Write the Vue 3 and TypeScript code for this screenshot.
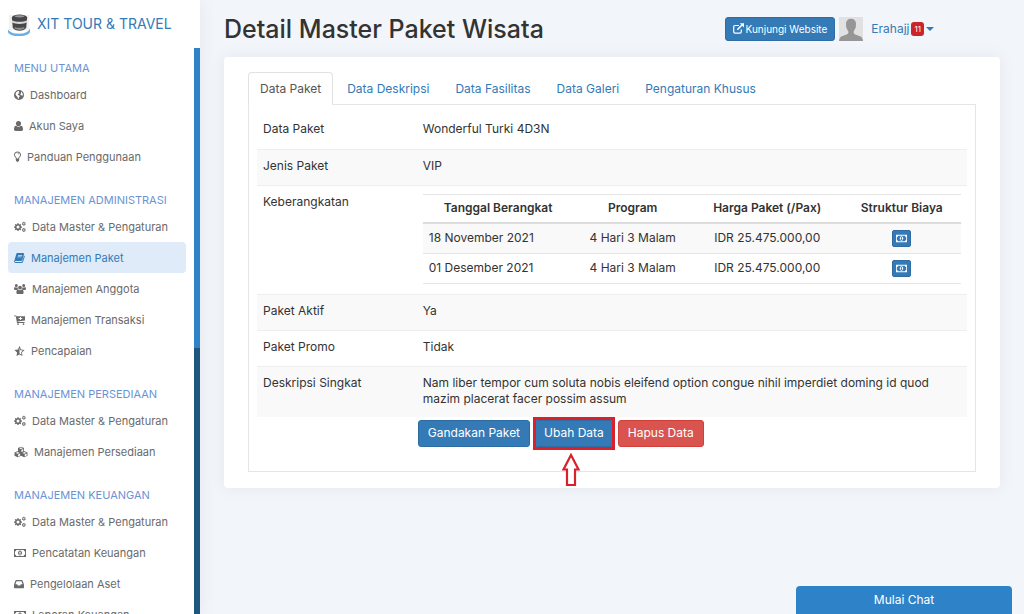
<script setup lang="ts">
import { ref } from 'vue'

type IconName = 'globe' | 'user' | 'bulb' | 'cogs' | 'book' | 'users' | 'cart' | 'star' | 'cubes' | 'money' | 'inbox'
interface MenuItem { label: string; icon: IconName; active?: boolean }
interface MenuGroup { title: string; items: MenuItem[] }
interface Departure { date: string; program: string; price: string }

const menu: MenuGroup[] = [
  {
    title: 'MENU UTAMA',
    items: [
      { label: 'Dashboard', icon: 'globe' },
      { label: 'Akun Saya', icon: 'user' },
      { label: 'Panduan Penggunaan', icon: 'bulb' },
    ],
  },
  {
    title: 'MANAJEMEN ADMINISTRASI',
    items: [
      { label: 'Data Master & Pengaturan', icon: 'cogs' },
      { label: 'Manajemen Paket', icon: 'book', active: true },
      { label: 'Manajemen Anggota', icon: 'users' },
      { label: 'Manajemen Transaksi', icon: 'cart' },
      { label: 'Pencapaian', icon: 'star' },
    ],
  },
  {
    title: 'MANAJEMEN PERSEDIAAN',
    items: [
      { label: 'Data Master & Pengaturan', icon: 'cogs' },
      { label: 'Manajemen Persediaan', icon: 'cubes' },
    ],
  },
  {
    title: 'MANAJEMEN KEUANGAN',
    items: [
      { label: 'Data Master & Pengaturan', icon: 'cogs' },
      { label: 'Pencatatan Keuangan', icon: 'money' },
      { label: 'Pengelolaan Aset', icon: 'inbox' },
      { label: 'Laporan Keuangan', icon: 'money' },
    ],
  },
]

const iconWidths: Record<IconName, number> = {
  globe: 10, user: 9, bulb: 7, cogs: 12, book: 11, users: 12, cart: 11, star: 11, cubes: 14, money: 12, inbox: 10,
}

// All glyphs are 12 units high and as wide as listed above.
const icons: Record<IconName, string> = {
  globe: 'M5 1a5 5 0 1 0 0 10A5 5 0 0 0 5 1zM4.300 1.900 5.300 2.300 4.700 3.300 5.500 3.700 4.600 4.700 3.600 5.100 4.200 6.100 5.300 6.400 5.900 7.200 4.800 8.400 4.600 9.900 3.900 9.800 3.500 8 2.300 6.800 1.500 5.500 2 3.600 3.100 2.400zM7 2.500 8.300 3.900 8.900 5.400 8.400 6.900 7.700 6.200 6.900 6.300 6.300 5.200 7 4.200z',
  user: 'M4.500 1a2.500 2.500 0 1 1 0 5.100 2.500 2.500 0 0 1 0-5.100zM2.100 5.700c1.400 1.300 3.400 1.300 4.800 0 1.500.1 2.100 1.700 2.100 3.600C9 10.300 8.300 11 7.500 11h-6C.7 11 0 10.300 0 9.300c0-1.900.6-3.500 2.100-3.600z',
  bulb: 'M3.500.500C1.600.500 0 1.900 0 3.700c0 1 .4 1.600 1 2.300.4.500.8 1.100.9 1.700-.3.300-.3.600 0 .9-.2.300-.2.700.1.900-.1.600.3.900.8.900.1.300.4.500.7.500s.6-.2.700-.5c.5 0 .9-.3.800-.9.300-.2.300-.6.100-.9.300-.3.300-.6 0-.9.100-.6.500-1.200.9-1.700.6-.7 1-1.300 1-2.300C7 1.900 5.400.500 3.500.500zm0 .9c1.400 0 2.600 1 2.600 2.300 0 .7-.3 1.200-.8 1.700-.5.600-1 1.300-1.100 2.100H2.800C2.700 6.700 2.200 6 1.700 5.400 1.200 4.900.9 4.400.9 3.700.9 2.400 2.100 1.400 3.500 1.400zM3.500 2.200v.5c.6 0 1.200.3 1.200.9h.5c0-.9-.9-1.400-1.700-1.400z',
  cogs: 'M3.400 2.200h1.200l.2 1 .7.300.9-.6.800.8-.6.900.3.700 1 .2v1.200l-1 .2-.3.700.6.900-.8.800-.9-.6-.7.300-.2 1H3.400l-.2-1-.7-.3-.9.600-.8-.8.6-.9-.3-.7-1-.2V5.500l1-.2.300-.7-.6-.9.800-.8.900.6.700-.3zM4 4.600a1.500 1.500 0 1 0 0 3 1.500 1.500 0 0 0 0-3zM9.400.800h.9l.2.700.7-.1.500.8-.5.500.5.600-.5.800-.7-.1-.2.700h-.9l-.2-.7-.7.100-.5-.8.500-.6L8 2.200l.5-.8.700.1zM9.850 2a.750.750 0 1 0 0 1.500.750.750 0 0 0 0-1.500zM9.400 7h.9l.2.700.7-.1.500.8-.5.500.5.600-.5.800-.7-.1-.2.700h-.9l-.2-.7-.7.100-.5-.8.500-.6L8 8.400l.5-.8.700.1zM9.850 8.200a.750.750 0 1 0 0 1.500.750.750 0 0 0 0-1.500z',
  book: 'M3.700 1h5.400c.8 0 1.100.5.900 1.200L8.300 8.100c-.2.600-.7 1-1.400 1H1.800c-.5 0-.7.100-.7.400 0 .4.300.5.800.5h5.600c.4 0 .6-.2.700-.5l1.900-6.100c.6.300.7.700.6 1.300L9 10c-.2.600-.7 1-1.300 1H1.800C.7 11 0 10.200.2 9.200L2.200 2.200C2.400 1.500 2.900 1 3.700 1zM4.200 3.100 4 3.700h4l.2-.6zM3.700 4.600l-.2.600h4l.2-.6z',
  users: 'M6 2.700a1.900 1.900 0 1 1 0 3.800 1.900 1.900 0 0 1 0-3.800zM2.300 1a1.500 1.500 0 1 1 0 3 1.500 1.500 0 0 1 0-3zM9.700 1a1.500 1.500 0 1 1 0 3 1.500 1.500 0 0 1 0-3zM.9 4c.9.700 1.900.7 2.700.2-.1 1 .2 1.700.7 2.100-.7.100-1.100.3-1.500.7H1C.4 7 0 6.700 0 6.100 0 5.100.2 4.100.9 4zM11.100 4c.7.100.9 1.100.9 2.100 0 .6-.4.900-1 .9H9.200c-.4-.4-.8-.6-1.500-.7.500-.4.800-1.100.7-2.100.8.500 1.800.5 2.700-.2zM4.100 6.600c1.200 1 2.600 1 3.800 0 1.300.1 1.700 1.400 1.700 2.800 0 1-.6 1.600-1.500 1.600H3.900c-.9 0-1.500-.6-1.500-1.600 0-1.400.4-2.700 1.700-2.800z',
  cart: 'M0 1.400h2.100l.3.900H11v4.300l-7.400.9.100.6h6.800V9H2.900V8.200L1.700 2.300H0zM4 9.200a.900.900 0 1 1 0 1.800.900.900 0 0 1 0-1.800zM9.500 9.200a.900.900 0 1 1 0 1.800.900.900 0 0 1 0-1.800zM6 3v1.100H4.700V5H6v1.100h.9V5h1.300v-.9H6.900V3z',
  star: 'M5.500.700v8.700l-3 1.600.6-3.500L.400 5.100l3.600-.5zM5.500.700l1.500 3.900 3.600.5-2.700 2.400.6 3.500-3-1.600v-.9l2 1-.4-2.300 1.800-1.600-2.500-.4-.9-2.300z',
  cubes: 'M7 .800l3 1.200v3.100L13.500 6.500v3.200L10.300 11.300 7 9.800l-3.300 1.500L.500 9.700V6.500L4 5.100V2zM7 1.600 5.100 2.300 7 3.100l1.900-.8zM7.400 3.900v2.200l1.800-.8V3.100zM3.600 6.100 1.700 6.900l2 .8 1.900-.8zM4.100 8.500v1.900l2-.9V7.600zM10.300 6.100l-1.900.8 1.900.8 2-.8zM10.700 8.500v1.900l2-.9V7.600z',
  money: 'M0 2h12v8H0zM2.300 3A1.600 1.600 0 0 1 .9 4.400v3.200A1.600 1.600 0 0 1 2.300 9h7.400a1.600 1.600 0 0 1 1.400-1.400V4.400A1.600 1.600 0 0 1 9.700 3zM6 3.500c1.200 0 1.900 1.200 1.900 2.500S7.200 8.500 6 8.500 4.100 7.300 4.100 6 4.800 3.500 6 3.500zM5.900 4.400l-1 .8.400.5.300-.2v1.400H5v.6h2v-.6h-.5V4.400z',
  inbox: 'M2.300 2h5.400c.4 0 .7.200.8.600L10 6.400v3.100c0 .4-.3.700-.7.700H.7c-.4 0-.7-.3-.7-.7V6.400l1.500-3.800c.1-.4.400-.6.800-.6zM2.600 3.200 1.400 6.300h1.800l.6 1.200h2.400l.6-1.200h1.800L7.400 3.200z',
}

const tabs: string[] = ['Data Paket', 'Data Deskripsi', 'Data Fasilitas', 'Data Galeri', 'Pengaturan Khusus']
const activeTab = ref<string>('Data Paket')

const departures: Departure[] = [
  { date: '18 November 2021', program: '4 Hari 3 Malam', price: 'IDR 25.475.000,00' },
  { date: '01 Desember 2021', program: '4 Hari 3 Malam', price: 'IDR 25.475.000,00' },
]
</script>

<template>
  <div class="layout">
    <aside class="sidebar">
      <a class="brand" href="#">
        <svg class="logo" viewBox="0 0 24 24" aria-hidden="true">
          <path d="M1 2h21v16H1z" fill="#f1f1f2" />
          <path d="M0 17c2 3.500 6 4.600 11.500 4.600S21 20.500 23 16v4c-2 3.200-6.500 4-11.500 4S1.500 23 0 20z" fill="#6aaee6" />
          <path d="M4 4.500c2-4 14-4 16 0l-1 11c-2 4-12 4-14 0z" fill="#47474a" />
          <ellipse cx="12" cy="3.500" rx="5" ry="1.200" fill="#98989a" />
          <path d="M4 7.500c4 2.200 12 2.200 16 0v2.200c-4 2.200-12 2.200-16 0z" fill="#d8d8d8" />
          <path d="M7 14.500c3 1.300 7 1.300 10 0v2c-3 1.500-7 1.500-10 0z" fill="#8d8d90" />
        </svg>
        <span>XIT TOUR &amp; TRAVEL</span>
      </a>
      <div class="side-body">
        <nav class="menu" aria-label="Menu">
          <section v-for="group in menu" :key="group.title" class="group">
            <h2>{{ group.title }}</h2>
            <a v-for="item in group.items" :key="item.label" href="#" class="item" :class="{ active: item.active }">
              <svg :width="iconWidths[item.icon]" height="12" :viewBox="`0 0 ${iconWidths[item.icon]} 12`" aria-hidden="true">
                <path :d="icons[item.icon]" fill="currentColor" fill-rule="evenodd" />
              </svg>
              <span>{{ item.label }}</span>
            </a>
          </section>
        </nav>
        <div class="rail"><div class="thumb"></div></div>
      </div>
    </aside>

    <main class="main">
      <header class="top">
        <h1>Detail Master Paket Wisata</h1>
        <div class="account">
          <a class="btn visit" href="#">
            <svg width="11" height="11" viewBox="0 0 11 11" fill="none" stroke="currentColor" aria-hidden="true">
              <path d="M6 2.500H2A1.300 1.300 0 0 0 .700 3.800v5A1.300 1.300 0 0 0 2 10.100h5a1.300 1.300 0 0 0 1.300-1.300V6.500" stroke-width="1.200" />
              <path d="M4.300 6.700 9 2" stroke-width="1.600" />
              <path d="M6.800.300H11v4.200z" fill="currentColor" stroke="none" />
            </svg>
            <span>Kunjungi Website</span>
          </a>
          <svg class="avatar" width="24" height="24" viewBox="0 0 24 24" role="img" aria-label="Erahajj">
            <path d="M0 0h24v24H0z" fill="#e1e1e1" />
            <path d="M12 1.800c3.200 0 5 2 5 5 0 1.200-.1 1.700-.3 2.300.5.500.1 2-.6 2.400-.3 1.200-.7 2.100-1.400 2.900v1.900c1 1.700 5 2 7.600 3.700.8.600 1.300 1.800 1.700 4H0c.4-2.200.9-3.400 1.700-4 2.600-1.700 6.600-2 7.600-3.700v-1.900c-.7-.8-1.100-1.700-1.400-2.900-.7-.4-1.100-1.900-.6-2.400C7.100 8.500 7 8 7 6.800c0-3 1.800-5 5-5z" fill="#969696" />
          </svg>
          <button class="user" type="button">
            <span>Erahajj</span>
            <span class="badge">11</span>
            <span class="caret"></span>
          </button>
        </div>
      </header>

      <section class="card">
        <div class="tabs" role="tablist">
          <button
            v-for="tab in tabs"
            :key="tab"
            type="button"
            role="tab"
            class="tab"
            :class="{ current: tab === activeTab }"
            :aria-selected="tab === activeTab"
            @click="activeTab = tab"
          >{{ tab }}</button>
        </div>

        <div class="panel" role="tabpanel">
          <table class="detail">
            <tbody>
              <tr><th scope="row">Data Paket</th><td>Wonderful Turki 4D3N</td></tr>
              <tr><th scope="row">Jenis Paket</th><td>VIP</td></tr>
              <tr>
                <th scope="row">Keberangkatan</th>
                <td>
                  <table class="departures">
                    <thead>
                      <tr>
                        <th scope="col">Tanggal Berangkat</th>
                        <th scope="col">Program</th>
                        <th scope="col">Harga Paket (/Pax)</th>
                        <th scope="col">Struktur Biaya</th>
                      </tr>
                    </thead>
                    <tbody>
                      <tr v-for="row in departures" :key="row.date">
                        <td class="date">{{ row.date }}</td>
                        <td>{{ row.program }}</td>
                        <td>{{ row.price }}</td>
                        <td>
                          <button class="cost" type="button" aria-label="Struktur Biaya">
                            <svg width="11" height="11" viewBox="0 0 12 12" aria-hidden="true">
                              <path :d="icons.money" fill="currentColor" fill-rule="evenodd" />
                            </svg>
                          </button>
                        </td>
                      </tr>
                    </tbody>
                  </table>
                </td>
              </tr>
              <tr><th scope="row">Paket Aktif</th><td>Ya</td></tr>
              <tr><th scope="row">Paket Promo</th><td>Tidak</td></tr>
              <tr>
                <th scope="row">Deskripsi Singkat</th>
                <td>Nam liber tempor cum soluta nobis eleifend option congue nihil imperdiet doming id quod mazim placerat facer possim assum</td>
              </tr>
            </tbody>
          </table>

          <div class="actions">
            <button class="btn" type="button">Gandakan Paket</button>
            <div class="marked">
              <button class="btn" type="button">Ubah Data</button>
              <span class="frame"></span>
              <svg class="arrow" width="20" height="34" viewBox="0 0 20 34" aria-hidden="true">
                <path d="M10 2 17.500 16.500H14V32H6V16.500H2.500z" fill="#fff" stroke="#d9202b" stroke-width="2.200" />
              </svg>
            </div>
            <button class="btn danger" type="button">Hapus Data</button>
          </div>
        </div>
      </section>
    </main>

    <button class="chat" type="button">Mulai Chat</button>
  </div>
</template>

<style>
body {
  margin: 0;
  background: #f2f5f9;
}
</style>

<style scoped>
.layout {
  display: flex;
  min-height: 100vh;
  background: #f2f5f9;
  color: #333;
  font: 12px/16px Inter, "Liberation Sans", sans-serif;
}
.layout *,
.layout *::before {
  box-sizing: border-box;
}
a {
  color: #337ab7;
  text-decoration: none;
}
button {
  font: inherit;
  cursor: pointer;
}

.sidebar {
  position: sticky;
  top: 0;
  display: flex;
  flex: 0 0 200px;
  flex-direction: column;
  height: 100vh;
  background: #fff;
  box-shadow: 0 0 16px rgba(60, 90, 130, 0.08);
}
.brand {
  display: flex;
  flex: 0 0 48px;
  align-items: center;
  gap: 6px;
  padding: 0 8px;
  font-size: 14px;
  white-space: nowrap;
}
.logo {
  width: 23px;
  height: 23px;
}
.side-body {
  display: flex;
  flex: 1;
  min-height: 0;
}
.menu {
  flex: 1;
  min-width: 0;
  padding: 8px 8px 0;
  overflow-y: auto;
  scrollbar-width: none;
}
.group {
  margin-bottom: 16px;
}
.group h2 {
  margin: 0;
  padding: 2px 6px 0;
  color: #6a93d4;
  font-size: 11px;
  font-weight: 400;
  line-height: 21px;
  white-space: nowrap;
}
.item {
  display: flex;
  align-items: center;
  gap: 6px;
  height: 31px;
  padding: 0 6px;
  border-radius: 4px;
  color: #6a6a6a;
  font-size: 11px;
  white-space: nowrap;
}
.item svg {
  flex: none;
}
.item.active {
  background: #dfebf9;
  color: #337ab7;
}
.rail {
  flex: 0 0 6px;
  background: #1d5780;
}
.thumb {
  height: 53%;
  background: #2e83c8;
}

.main {
  flex: 1;
  min-width: 0;
  padding: 0 24px 24px;
}
.top {
  display: flex;
  align-items: center;
  justify-content: space-between;
  height: 57px;
}
h1 {
  margin: 0;
  font-size: 25px;
  font-weight: 500;
  line-height: 32px;
  white-space: nowrap;
}
.account {
  display: flex;
  align-items: center;
  gap: 4px;
  padding-right: 66px;
}
.btn {
  display: inline-flex;
  align-items: center;
  justify-content: center;
  height: 27px;
  padding: 0 9px;
  border: 1px solid #2e6da4;
  border-radius: 3px;
  background: #337ab7;
  color: #fff;
  white-space: nowrap;
}
.visit {
  gap: 2px;
  height: 24px;
  padding: 0 7px;
  font-size: 10px;
}
.user {
  display: flex;
  align-items: center;
  gap: 2px;
  padding: 0 0 0 4px;
  border: 0;
  background: none;
  color: #337ab7;
}
.badge {
  padding: 0 3px;
  border-radius: 3px;
  background: #c9252b;
  color: #fff;
  font-size: 8px;
  line-height: 14px;
}
.caret {
  border: 4px solid transparent;
  border-top-color: currentColor;
  border-bottom: 0;
}

.card {
  padding: 15px 24px 16px;
  border-radius: 4px;
  background: #fff;
  box-shadow: 0 0 16px rgba(60, 90, 130, 0.08);
}
.tabs {
  display: flex;
  gap: 2px;
}
.tab {
  height: 33px;
  margin-bottom: -1px;
  padding: 0 11px;
  border: 1px solid transparent;
  border-radius: 4px 4px 0 0;
  background: none;
  color: #337ab7;
  white-space: nowrap;
}
.tab.current {
  border-color: #e2e2e2;
  border-bottom-color: #fff;
  background: #fff;
  color: #555;
}
.panel {
  padding: 8px 8px 24px;
  border: 1px solid #e5e5e5;
}
table {
  width: 100%;
  border-collapse: collapse;
}
.detail > tbody > tr {
  height: 36px;
}
.detail > tbody > tr:nth-child(even) {
  background: #f9f9f9;
}
.detail > tbody > tr + tr {
  border-top: 1px solid #eee;
}
.detail > tbody > tr > * {
  padding: 8px 6px 10px;
  font-weight: 400;
  text-align: left;
  vertical-align: top;
}
.detail > tbody > tr > th {
  width: 22.5%;
}
.departures {
  border-bottom: 1px solid #e5e5e5;
  table-layout: fixed;
}
.departures th {
  width: 22%;
  height: 29px;
  padding: 0 6px;
  border-top: 1px solid #e5e5e5;
  border-bottom: 2px solid #ddd;
  font-weight: 600;
  text-align: center;
}
.departures th:nth-child(odd) {
  width: 28%;
}
.departures td {
  height: 30px;
  padding: 0 6px;
  border-top: 1px solid #e5e5e5;
  text-align: center;
}
.departures .date {
  text-align: left;
}
.departures tbody tr:first-child {
  background: #f9f9f9;
}
.cost {
  display: inline-flex;
  align-items: center;
  justify-content: center;
  width: 19px;
  height: 17px;
  padding: 0;
  border: 1px solid #2e6da4;
  border-radius: 2px;
  background: #337ab7;
  color: #fff;
  vertical-align: middle;
}
.actions {
  display: flex;
  gap: 4px;
  margin: 3px 0 0 22.5%;
  padding-left: 1px;
}
.marked {
  position: relative;
}
.frame {
  position: absolute;
  inset: -3px -1px;
  border: 3px solid #d9202b;
  pointer-events: none;
}
.arrow {
  position: absolute;
  top: 33px;
  left: 27px;
}
.danger {
  border-color: #d43f3a;
  background: #d9534f;
}
.chat {
  position: fixed;
  right: 12px;
  bottom: 0;
  width: 216px;
  height: 28px;
  border: 0;
  border-radius: 4px 4px 0 0;
  background: #2e83c8;
  color: #fff;
}
</style>
